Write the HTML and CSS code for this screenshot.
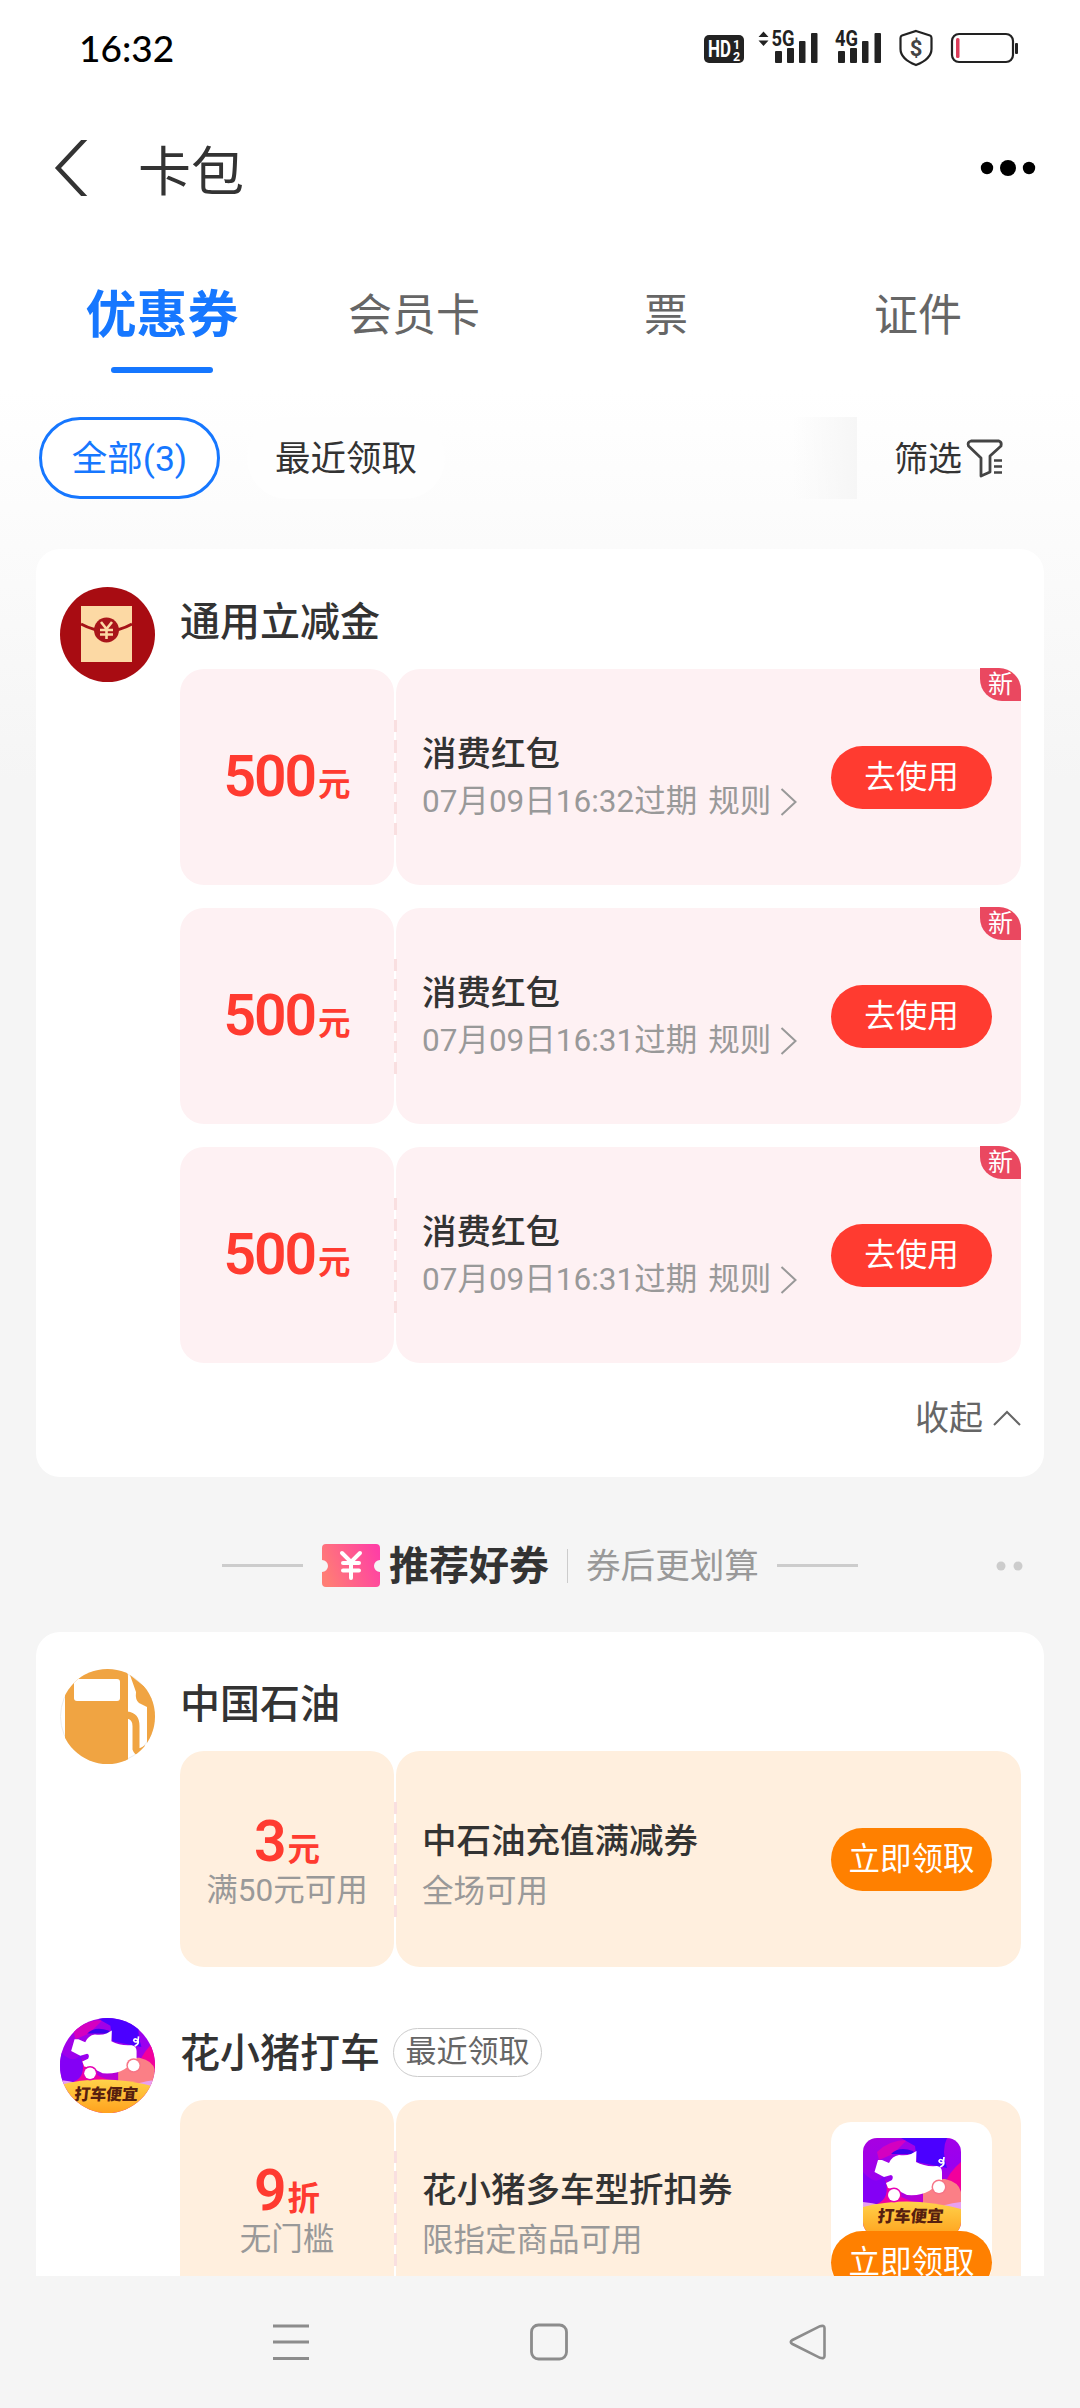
FILE: index.html
```html
<!DOCTYPE html>
<html lang="zh-CN">
<head>
<meta charset="utf-8">
<title>卡包</title>
<link rel="stylesheet" href="styles.css">
</head>
<body>
<svg class="defs" width="0" height="0">
  <defs>
    <linearGradient id="ticketFill" x1="0" y1="0.6" x2="1" y2="0.3"><stop offset="0" stop-color="#ff7d75"/><stop offset="1" stop-color="#ff3fa5"/></linearGradient>
    <linearGradient id="pigSky" x1="0" y1="0" x2="0.3" y2="1"><stop offset="0" stop-color="#a800e0"/><stop offset="0.5" stop-color="#9a00f0"/><stop offset="1" stop-color="#e000b0"/></linearGradient>
    <linearGradient id="pigGround" x1="0" y1="0" x2="0" y2="1"><stop offset="0" stop-color="#ffd24a"/><stop offset="1" stop-color="#ffa21e"/></linearGradient>
    <symbol id="chevron" viewBox="0 0 18 28"><path d="M1.500 1L15.500 14L1.500 27" fill="none" stroke="#999" stroke-width="2"/></symbol>
    <symbol id="pig" viewBox="0 0 98 98">
      <rect width="98" height="98" fill="url(#pigSky)"/>
      <path d="M14 14Q26 2 44 2L30 16L16 22Z" fill="#d400c0"/>
      <path d="M38 0H84Q78 12 84 30L54 24L52 8Z" fill="#4b00ff"/>
      <path d="M0 34Q14 50 22 36Q28 56 18 66H0Z" fill="#8400f5"/>
      <path d="M22 40Q30 62 62 66H14Q28 60 22 40Z" fill="#f000a0"/>
      <path d="M98 24Q86 34 82 46L98 56Z" fill="#f2009c"/>
      <path d="M60 67V52Q70 40 82 41Q96 44 98 54V68Z" fill="#fb7f86"/>
      <path d="M0 64Q20 66 30 72H0ZM98 64Q80 66 70 72H98Z" fill="#e8a0f0"/>
      <path d="M0 69Q46 57 98 71V98H0Z" fill="url(#pigGround)"/>
      <path d="M34 16L28 16Q36 8 50 13L52 16Z" fill="#3b00ed"/>
      <path d="M11.500 34L15 22L19 22L26 25Q29 18 36 17Q43 18 48 16L53.500 13L53 24Q62 29 74 28Q79 29 79 34V44L66 53Q58 58 44 57L34 52L25 50L23 45L29 42Q31 38 28 37L21 39Z" fill="#fff"/>
      <path d="M77 29Q82 27 80.500 23Q77 20 76 23Q77 26 80.500 24L81 19" fill="none" stroke="#fff" stroke-width="1.700"/>
      <circle cx="31" cy="57" r="7.500" fill="#e600b4"/><circle cx="31" cy="57" r="6" fill="#fff"/>
      <circle cx="76" cy="49" r="7.500" fill="#f77587"/><circle cx="76" cy="49" r="6" fill="#fff"/>
      <text x="14" y="84.500" class="pig-label" transform="skewX(-6) translate(9 0)">打车便宜</text>
    </symbol>
  </defs>
</svg>

<main class="screen">
  <div class="status">
    <span class="time">16:32</span>
    <svg class="status-icons" width="320" height="44" viewBox="0 0 320 44">
      <rect x="4" y="9" width="40" height="28" rx="5" fill="#222"/>
      <text x="8" y="31" class="hd" textLength="23" lengthAdjust="spacingAndGlyphs">HD</text>
      <text x="33" y="22.500" class="hd-sub">1</text><text x="33" y="34.500" class="hd-sub">2</text>
      <path d="M58.500 11L63.500 5.500L68.500 11ZM58.500 14.500L63.500 20L68.500 14.500Z" fill="#222"/>
      <text x="71.500" y="20" class="net" textLength="23" lengthAdjust="spacingAndGlyphs">5G</text>
      <g fill="#222"><rect x="75" y="25" width="7" height="12" rx="1"/><rect x="87" y="22" width="7" height="15" rx="1"/><rect x="99" y="15" width="6.500" height="22" rx="1"/><rect x="111" y="7" width="6.500" height="30" rx="1"/></g>
      <text x="135" y="20" class="net" textLength="23" lengthAdjust="spacingAndGlyphs">4G</text>
      <g fill="#222"><rect x="138" y="25" width="7" height="12" rx="1"/><rect x="150" y="22" width="7" height="15" rx="1"/><rect x="162" y="15" width="6.500" height="22" rx="1"/><rect x="174.500" y="7" width="6.500" height="30" rx="1"/></g>
      <path d="M216 5L230 9.500Q231.500 10 231.500 12V23Q231.500 33 216 39Q200.500 33 200.500 23V12Q200.500 10 202 9.500Z" fill="none" stroke="#222" stroke-width="2.200"/>
      <text x="216" y="30" class="dollar">$</text>
      <rect x="252" y="8" width="61" height="28" rx="7" fill="none" stroke="#222" stroke-width="2.200"/>
      <rect x="256" y="12" width="3.500" height="20" rx="1.500" fill="#dc3c5a"/>
      <rect x="315" y="17" width="3" height="11" rx="1" fill="#222"/>
    </svg>
  </div>

  <header class="nav">
    <svg class="back" width="40" height="56" viewBox="0 2 40 56"><path d="M37 -1L8 30L37 61" fill="none" stroke="#333" stroke-width="4.500"/></svg>
    <h1>卡包</h1>
    <svg class="more" width="60" height="20" viewBox="0 0 60 20"><circle cx="9" cy="10" r="6.200"/><circle cx="30" cy="10" r="8"/><circle cx="51" cy="10" r="6.200"/></svg>
  </header>

  <nav class="tabs">
    <span class="tab active">优惠券</span><span class="tab">会员卡</span><span class="tab">票</span><span class="tab">证件</span>
  </nav>

  <div class="filters">
    <span class="chip selected">全部(3)</span><span class="chip">最近领取</span>
    <span class="fade"></span>
    <span class="sift">筛选</span>
    <svg class="funnel" width="38" height="40" viewBox="0 0 38 40"><path d="M5 3H33Q36 4 35 8L24 18V34L15 38V20L2.500 8Q1 4 5 3Z" fill="none" stroke="#444" stroke-width="2.800" stroke-linejoin="round"/><path d="M28 22.500H36M28 28.500H36M28 34.500H36" stroke="#444" stroke-width="2.600"/></svg>
  </div>

  <section class="card owned">
    <div class="brand">
      <svg class="avatar" width="95" height="95" viewBox="0 0 95 95"><circle cx="47.500" cy="47.500" r="47.500" fill="#a80c12"/><rect x="21" y="19" width="51" height="56" fill="#fcd9a4"/><path d="M21 37Q47 51 72 37" fill="none" stroke="#a51317" stroke-width="3"/><circle cx="46.500" cy="43" r="12.500" fill="#a9151a"/><path d="M41 35L46.500 42L52 35M46.500 42V52M40 43H53M40 47.500H53" fill="none" stroke="#fcd9a4" stroke-width="2.600"/></svg>
      <div class="offers">
        <h2>通用立减金</h2>
        <article class="coupon pink"><div class="value"><p class="amount"><b>500</b>元</p></div><i class="perf"></i><div class="info"><div class="words"><h3>消费红包</h3><p>07月09日16:32过期<span class="rule">规则</span><svg width="18" height="28"><use href="#chevron"/></svg></p></div><span class="btn">去使用</span><em class="badge">新</em></div></article>
        <article class="coupon pink"><div class="value"><p class="amount"><b>500</b>元</p></div><i class="perf"></i><div class="info"><div class="words"><h3>消费红包</h3><p>07月09日16:31过期<span class="rule">规则</span><svg width="18" height="28"><use href="#chevron"/></svg></p></div><span class="btn">去使用</span><em class="badge">新</em></div></article>
        <article class="coupon pink"><div class="value"><p class="amount"><b>500</b>元</p></div><i class="perf"></i><div class="info"><div class="words"><h3>消费红包</h3><p>07月09日16:31过期<span class="rule">规则</span><svg width="18" height="28"><use href="#chevron"/></svg></p></div><span class="btn">去使用</span><em class="badge">新</em></div></article>
      </div>
    </div>
    <div class="collapse"><span>收起</span><svg width="28" height="16" viewBox="0 0 28 16"><path d="M1 15L14 2L27 15" fill="none" stroke="#666" stroke-width="2"/></svg></div>
  </section>

  <div class="divider">
    <i class="rule-line"></i>
    <svg class="ticket" width="58" height="43" viewBox="0 0 58 43"><path d="M4 0H54Q58 0 58 4V16A6 6 0 0 0 58 28V39Q58 43 54 43H4Q0 43 0 39V28A6 6 0 0 0 0 16V4Q0 0 4 0Z" fill="url(#ticketFill)"/><path d="M20 9L29 18L38 9M29 18V34M21 19H37M21 26.500H37" fill="none" stroke="#fff" stroke-width="4" stroke-linecap="round"/></svg>
    <strong>推荐好券</strong><i class="bar"></i><span>券后更划算</span>
    <i class="rule-line"></i>
    <svg class="dots" width="28" height="10" viewBox="0 0 28 10"><circle cx="5" cy="5" r="4.500"/><circle cx="22" cy="5" r="4.500"/></svg>
  </div>

  <section class="card deals">
    <div class="brand">
      <svg class="avatar" width="95" height="95" viewBox="0 0 95 95"><clipPath id="round"><circle cx="47.500" cy="47.500" r="47.500"/></clipPath><circle cx="47.500" cy="47.500" r="47" fill="#fff" stroke="#ececec"/><g clip-path="url(#round)"><path d="M5 0H60Q68 0 68 8V95H5Z" fill="#f0a442"/><rect x="14" y="10" width="46" height="22" rx="3" fill="#fff"/><path d="M70 6L95 26V72L87 75V38L79 34Q75 31 76 23Z" fill="#f0a442"/><path d="M67 46Q76 47 76 57V80Q78 86 87 79" fill="none" stroke="#f0a442" stroke-width="7"/></g></svg>
      <div class="offers">
        <h2>中国石油</h2>
        <article class="coupon orange"><div class="value"><p class="amount"><b>3</b>元</p><p class="limit">满50元可用</p></div><i class="perf"></i><div class="info"><div class="words"><h3>中石油充值满减券</h3><p>全场可用</p></div><span class="btn">立即领取</span></div></article>
      </div>
    </div>
    <div class="brand second">
      <svg class="avatar round" width="95" height="95"><use href="#pig"/></svg>
      <div class="offers">
        <h2>花小猪打车<span class="tag">最近领取</span></h2>
        <article class="coupon orange"><div class="value"><p class="amount"><b>9</b>折</p><p class="limit">无门槛</p></div><i class="perf"></i><div class="info"><div class="words"><h3>花小猪多车型折扣券</h3><p>限指定商品可用</p></div><div class="promo"><svg width="98" height="98"><use href="#pig"/></svg><span class="btn">立即领取</span></div></div></article>
      </div>
    </div>
  </section>
</main>

<footer class="sysbar">
  <svg width="36" height="38" viewBox="0 0 36 38"><path d="M0 3H36M0 19H36M0 35.500H36" stroke="#8c8c8c" stroke-width="3"/></svg>
  <svg width="38" height="38" viewBox="0 0 38 38"><rect x="1.500" y="2" width="35" height="34" rx="7" fill="none" stroke="#8c8c8c" stroke-width="2.800"/></svg>
  <svg width="38" height="38" viewBox="0 0 38 38"><path d="M3.500 17L31 3.200Q35.500 2 35.500 5V33Q35.500 36 31 34.800L3.500 21Q0 19 3.500 17Z" fill="none" stroke="#8c8c8c" stroke-width="2.600"/></svg>
</footer>
</body>
</html>
```
FILE: styles.css
```css
* { box-sizing: border-box; margin: 0; padding: 0; }
body {
  width: 1080px;
  height: 2408px;
  overflow: hidden;
  display: flex;
  flex-direction: column;
  background: linear-gradient(#fff 0, #fff 390px, #f5f5f5 780px);
  font-family: Roboto, "Noto Sans CJK SC", sans-serif;
  color: #333;
}
svg { display: block; flex: none; }
i, em { font-style: normal; }
.defs { position: absolute; }
.screen { height: 2276px; flex: none; overflow: hidden; }

.status { display: flex; justify-content: space-between; height: 98px; padding: 26px 60px 0 79px; }
.time { font: 500 37px/44px Lato, Roboto, sans-serif; color: #000; }
.hd { font: bold 23px Roboto, sans-serif; fill: #fff; }
.hd-sub { font: bold 12.500px Roboto, sans-serif; fill: #fff; }
.net { font: bold 21.500px Roboto, sans-serif; fill: #222; }
.dollar { font: bold 22px Roboto, sans-serif; fill: #444; text-anchor: middle; }

.nav { display: flex; align-items: center; height: 140px; padding: 0 42px 0 50px; }
.back { margin-right: 48px; }
.nav h1 { font-size: 53px; font-weight: 400; line-height: 80px; padding-top: 9px; }
.more { margin-left: auto; }

.tabs { display: grid; grid-template-columns: repeat(4, 252px); height: 179px; padding: 44px 36px 0; }
.tab { display: flex; flex-direction: column; align-items: center; font-size: 44px; line-height: 68px; color: #666; }
.tab.active { font-size: 51px; font-weight: 700; color: #1677ff; }
.tab.active::after { content: ""; width: 102px; height: 6px; border-radius: 3px; margin-top: 17px; background: #1677ff; }

.filters { display: flex; align-items: center; height: 82px; padding-left: 39px; font-size: 35.500px; }
.chip { display: flex; align-items: center; justify-content: center; height: 82px; width: 198px; margin-right: 2px; padding-bottom: 5px; border-radius: 41px; background: #fefefe; }
.selected { width: 181px; margin-right: 27px; border: 3px solid #1677ff; color: #1677ff; background: #fff; }
.fade { width: 64px; height: 82px; margin-left: 346px; background: linear-gradient(90deg, rgba(245,245,245,0), #f6f6f6); }
.sift { margin-left: 37px; padding-bottom: 4px; font-size: 34px; }
.funnel { margin-left: 4px; }

.card { margin: 0 36px; padding: 38px 23px 0 24px; border-radius: 24px; background: #fff; }
.owned { margin-top: 50px; height: 928px; }
.brand { display: flex; }
.avatar.round { border-radius: 50%; }
.offers { flex: 1; margin-left: 25px; }
h2 { display: flex; align-items: center; height: 64px; margin-bottom: 18px; font-size: 40px; font-weight: 500; }
.tag { margin: 5px 0 0 13px; width: 149px; height: 49px; border: 1.500px solid #ccc; border-radius: 25px; font-size: 31px; font-weight: 400; line-height: 46px; text-align: center; color: #666; }

.coupon { position: relative; display: flex; gap: 2px; height: 216px; margin-bottom: 23px; }
.value { display: flex; flex-direction: column; align-items: center; justify-content: center; width: 214px; border-radius: 24px; }
.info { flex: 1; display: flex; align-items: center; justify-content: space-between; padding: 0 29px 0 26px; border-radius: 24px; }
.pink .value, .pink .info { background: #fef1f3; }
.orange .value, .orange .info { background: #ffefde; }
.pink .value { padding-top: 8px; }
.perf { position: absolute; left: 214px; top: 51px; width: 3px; height: 115px; background: repeating-linear-gradient(#f9dfe0 0 12px, transparent 12px 20.500px); }
.amount { font-size: 32.500px; line-height: 56px; font-weight: 700; color: #ff3b30; }
.amount b { font-size: 57px; font-weight: 600; letter-spacing: -2px; margin-right: 3px; }
.limit { font-size: 31.500px; line-height: 26px; color: #999; }
.words { padding-top: 1px; }
.words h3 { font-size: 34.500px; line-height: 48px; font-weight: 500; color: #333; }
.words p { display: flex; align-items: center; font-size: 31.500px; line-height: 48px; color: #999; }
.orange .words { padding-top: 18px; }
.orange .words p { line-height: 54px; }
.rule { margin: 0 9px 0 11px; }
.btn { display: block; width: 161px; height: 63px; border-radius: 32px; font-size: 31.500px; line-height: 63px; text-align: center; color: #fff; background: #ff3b30; }
.orange .btn { background: #ff8000; }
.badge { position: absolute; top: -1px; right: 0; width: 41px; height: 33px; border-radius: 0 22px 0 22px; font-size: 25px; line-height: 33px; text-align: center; color: #fff; background: #ea4860; }
.collapse { display: flex; align-items: center; justify-content: flex-end; gap: 10px; height: 64px; font-size: 34px; color: #666; }
.collapse span { padding-bottom: 5px; }

.divider { position: relative; display: flex; align-items: center; height: 155px; padding: 22px 0 0 222px; }
.rule-line { width: 81px; height: 3px; background: #ccc; }
.ticket { margin: 0 9px 0 19px; }
.divider strong { padding-bottom: 6px; font-size: 40px; font-weight: 600; }
.bar { width: 1px; height: 34px; margin: 0 18px; background: #ccc; }
.divider span { margin-right: 18px; padding-bottom: 5px; font-size: 34.600px; color: #999; }
.dots { margin-left: 138px; fill: #ccc; }

.deals { height: 700px; padding-top: 37px; }
.second { margin-top: 28px; }
.promo { display: flex; flex-direction: column; align-items: center; align-self: flex-start; width: 161px; height: 164px; margin-top: 22px; padding-top: 16px; border-radius: 20px; background: #fff; }
.promo svg { border-radius: 14px; }
.promo .btn { margin-top: -5px; flex: none; position: relative; }
.pig-label { font: 900 16.500px "Noto Sans CJK SC", sans-serif; fill: #57200f; }

.sysbar { position: relative; display: flex; align-items: flex-start; height: 132px; padding: 47px 0 0 273px; gap: 221px; background: #f5f5f5; }
```
